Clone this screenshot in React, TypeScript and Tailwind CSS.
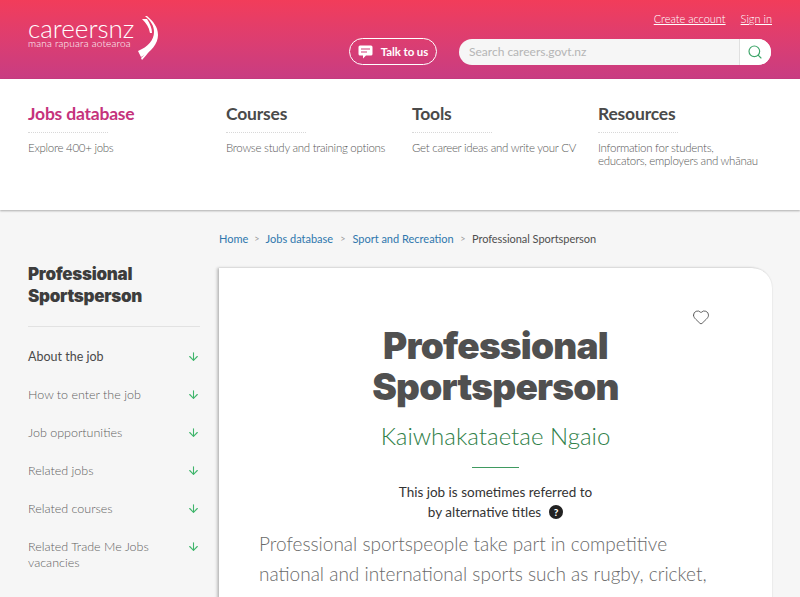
import { ArrowDown, Heart, Search } from 'lucide-react';

const navItems = [
    { title: 'Jobs database', text: ['Explore 400+ jobs'], width: 'w-[198px]', active: true },
    { title: 'Courses', text: ['Browse study and training options'], width: 'w-[186px]', active: false },
    { title: 'Tools', text: ['Get career ideas and write your CV'], width: 'w-[186px]', active: false },
    { title: 'Resources', text: ['Information for students,', 'educators, employers and whānau'], width: 'w-[190px]', active: false },
];

const sideLinks = ['About the job', 'How to enter the job', 'Job opportunities', 'Related jobs', 'Related courses', 'Related Trade Me Jobs vacancies'];

const crumbs = ['Home', 'Jobs database', 'Sport and Recreation'];

function Logo() {
    return (
        <div className="flex items-start">
            <div className="flex flex-col">
                <span className="text-[26px] leading-[19px] pt-[2px] font-light text-white">careersnz</span>
                <span className="text-[10px] leading-[10px] font-light tracking-[0.2px] text-white">mana rapuara aotearoa</span>
            </div>
            <svg width="22" height="46" viewBox="0 0 22 46" className="ml-[3px] mt-[-1px]" fill="white">
                <path d="M8 0 C14 5 17 10 17 16 C17 24 11 31 1 35 L4 41 C14 36 21 28 21 19 C21 11 16 5 10 0 Z" />
                <path d="M5 3 L10 3 C13 8 15 12 15 17 L13 17 C12 11 9 7 5 3 Z" />
                <path d="M19 11 C21 20 16 33 5 44 L4 42 C12 35 19 24 19 11 Z" />
            </svg>
        </div>
    );
}

function TalkIcon() {
    return (
        <svg width="15" height="14" viewBox="0 0 15 14">
            <path d="M2 0.5 H13 A1.5 1.5 0 0 1 14.5 2 V9 A1.5 1.5 0 0 1 13 10.5 H8 L5 13.5 V10.5 H2 A1.5 1.5 0 0 1 0.5 9 V2 A1.5 1.5 0 0 1 2 0.5 Z" fill="white" />
            <path d="M3 4 H12 M3 7 H9" stroke="#d43c78" strokeWidth="1.2" />
        </svg>
    );
}

export default function App() {
    return (
        <div className="font-['Lato',sans-serif] w-[800px] h-[597px] overflow-hidden bg-[#f6f6f6]">
            <header className="h-[79px] bg-gradient-to-b from-[#f23c5a] to-[#c83c82] flex justify-between pl-[28px] pr-[28px]">
                <div className="pt-[17px]">
                    <Logo />
                </div>
                <div className="flex flex-col items-end pt-[12px]">
                    <div className="flex gap-[15px] text-[11px] leading-[14px] font-light text-white">
                        <a className="underline">Create account</a>
                        <a className="underline">Sign in</a>
                    </div>
                    <div className="flex items-center gap-[22px] mt-[12px] mr-[1px]">
                        <button className="h-[27px] w-[88px] rounded-full border border-white flex items-center justify-center gap-[8px] text-[11.5px] font-bold tracking-[-0.1px] text-white">
                            <TalkIcon />
                            Talk to us
                        </button>
                        <div className="h-[26px] w-[312px] rounded-full bg-[#f6f6f6] flex items-center overflow-hidden">
                            <span className="flex-1 pl-[10px] text-[12px] text-[#b5b5b5]">Search careers.govt.nz</span>
                            <div className="w-[32px] h-full bg-white border-l border-[#e0e0e0] flex items-center justify-center pr-[2px]">
                                <Search size={16} className="text-[#3fa66b]" strokeWidth={1.75} />
                            </div>
                        </div>
                    </div>
                </div>
            </header>

            <nav className="h-[131px] bg-white shadow-[0_1px_2px_rgba(0,0,0,0.3)] flex pl-[28px] pt-[24px] relative">
                {navItems.map(item => (
                    <div key={item.title} className={item.width}>
                        <p className={`text-[17.5px] leading-[22px] font-bold tracking-[-0.2px] ${item.active ? 'text-[#c5337c]' : 'text-[#4a4a4a]'}`}>{item.title}</p>
                        <div className="w-[80px] mt-[7px] border-t border-dotted border-[#d8d8d8]" />
                        <div className="mt-[8px] text-[11.5px] leading-[13px] font-light tracking-[-0.28px] text-[#595959]">
                            {item.text.map(line => <p key={line}>{line}</p>)}
                        </div>
                    </div>
                ))}
            </nav>

            <div className="flex pl-[28px] pt-[22px]">
                <aside className="w-[172px] pt-[31px]">
                    <h2 className="font-['Inter',sans-serif] text-[17px] leading-[22px] font-black tracking-[-0.3px] text-[#3d3d3d]">Professional<br />Sportsperson</h2>
                    <div className="border-t border-[#e2e2e2] mt-[19px] mb-[22px]" />
                    <ul className="flex flex-col gap-[22px]">
                        {sideLinks.map((link, i) => (
                            <li key={link} className="flex justify-between items-start">
                                <span className={`w-[140px] text-[12.5px] leading-[16px] ${i === 0 ? 'text-[#4a4a4a]' : 'font-light text-[#5f5f5f]'}`}>{link}</span>
                                <ArrowDown size={13} strokeWidth={2} className="text-[#3fb56b] mt-[1px]" />
                            </li>
                        ))}
                    </ul>
                </aside>

                <main className="ml-[19px] w-[553px]">
                    <div className="flex items-center h-[14px] text-[11px] font-normal">
                        <a className="text-[#2f77ad]">{crumbs[0]}</a>
                        <span className="mx-[6px] text-[#999] text-[9px]">&gt;</span>
                        <a className="text-[#2f77ad]">{crumbs[1]}</a>
                        <span className="mx-[7px] text-[#999] text-[9px]">&gt;</span>
                        <a className="text-[#2f77ad]">{crumbs[2]}</a>
                        <span className="mx-[6.5px] text-[#999] text-[9px]">&gt;</span>
                        <span className="text-[#4f4f4f] tracking-[-0.05px]">Professional Sportsperson</span>
                    </div>
                    <article className="mt-[22px] h-[400px] bg-white rounded-tr-[20px] shadow-[-2px_0_3px_rgba(0,0,0,0.22),0_0_2px_rgba(0,0,0,0.12)] pt-[57px] relative">
                        <Heart size={18} strokeWidth={1} className="absolute right-[62px] top-[40px] text-[#333]" />
                        <h1 className="font-['Inter',sans-serif] w-[300px] mx-auto text-center text-[37px] leading-[41px] font-black tracking-[-0.8px] text-[#505050]">Professional Sportsperson</h1>
                        <p className="mt-[14px] text-center text-[24px] leading-[30px] font-light text-[#2f8048]">Kaiwhakataetae Ngaio</p>
                        <div className="w-[47px] mx-auto mt-[16px] border-t border-[#3f9a60]" />
                        <div className="mt-[14px] text-center text-[13.5px] leading-[20px] text-[#333]">
                            <p>This job is sometimes referred to</p>
                            <p className="flex items-center justify-center">
                                by alternative titles
                                <span className="ml-[8px] w-[14px] h-[14px] rounded-full bg-[#222] text-white text-[10px] leading-[14px] font-black">?</span>
                            </p>
                        </div>
                        <p className="mt-[7px] mx-[40px] text-[19px] leading-[30px] font-light text-[#6a6a6a]">
                            Professional sportspeople take part in competitive national and international sports such as rugby, cricket, netball, football, tennis, athletics and golf.
                        </p>
                    </article>
                </main>
            </div>
        </div>
    );
}
